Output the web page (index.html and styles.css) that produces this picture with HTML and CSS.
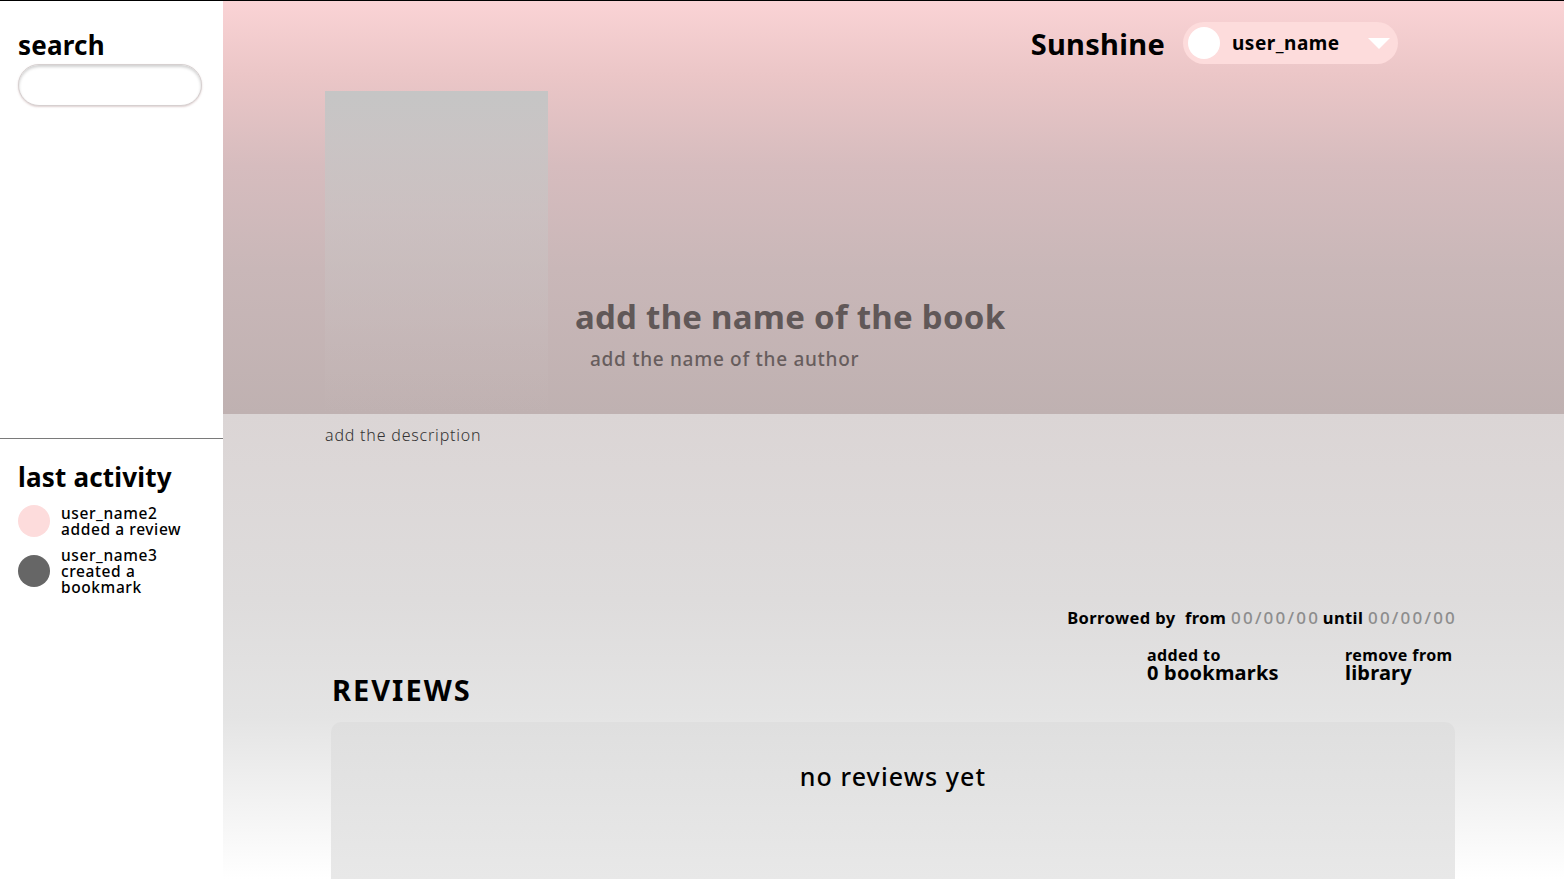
FILE: index.html
```html
<!DOCTYPE html>
<html lang="en">
<head>
<meta charset="utf-8">
<title>Sunshine - book</title>
<link rel="stylesheet" href="styles.css">
</head>
<body>
<aside class="sidebar">
  <div class="search-block">
    <h2 class="side-title">search</h2>
    <input class="search-input" type="text" aria-label="search">
  </div>
  <div class="activity">
    <h2 class="side-title">last activity</h2>
    <ul class="activity-list">
      <li class="activity-item"><span class="dot dot-pink"></span><span class="activity-text">user_name2<br>added a review</span></li>
      <li class="activity-item"><span class="dot dot-grey"></span><span class="activity-text">user_name3<br>created a<br>bookmark</span></li>
    </ul>
  </div>
</aside>
<main class="main">
  <header class="hero">
    <div class="topbar">
      <span class="brand">Sunshine</span>
      <div class="user-pill">
        <span class="user-avatar"></span>
        <span class="user-name">user_name</span>
        <span class="caret"></span>
      </div>
    </div>
    <div class="book-row">
      <div class="cover"></div>
      <div class="book-titles">
        <h1 class="book-title">add the name of the book</h1>
        <p class="book-author">add the name of the author</p>
      </div>
    </div>
  </header>
  <section class="details">
    <p class="description">add the description</p>
    <p class="borrowed"><b>Borrowed by</b>&nbsp; <b>from</b> <span class="date">00/00/00</span> <b>until</b> <span class="date">00/00/00</span></p>
    <div class="reviews-row">
      <h2 class="reviews-title">REVIEWS</h2>
      <div class="actions">
        <div class="action"><span class="action-small">added to</span><span class="action-big">0 bookmarks</span></div>
        <div class="action"><span class="action-small">remove from</span><span class="action-big">library</span></div>
      </div>
    </div>
    <div class="review-box">
      <p class="no-reviews">no reviews yet</p>
    </div>
  </section>
</main>
</body>
</html>
```
FILE: styles.css
```css
* { box-sizing: border-box; }
html, body { height: 100%; }
body {
  margin: 0;
  border-top: 1px solid #000;
  display: flex;
  overflow: hidden;
  font-family: "Noto Sans", "Open Sans", sans-serif;
  color: #000;
  background: #fff;
}
h1, h2, p, ul { margin: 0; padding: 0; }

.sidebar {
  width: 223px;
  flex: none;
  background: #fff;
  display: flex;
  flex-direction: column;
}
.search-block {
  height: 438px;
  padding: 27px 0 0 18px;
  border-bottom: 1px solid #7a7a7a;
}
.side-title {
  font-size: 26px;
  font-weight: 700;
  line-height: 34px;
  letter-spacing: 0.2px;
}
.search-input {
  display: block;
  margin-top: 2px;
  width: 184px;
  height: 42px;
  border-radius: 21px;
  border: 1px solid #d6d0d0;
  background: #fff;
  box-shadow: inset 0 2px 3px rgba(0,0,0,0.18), 0 1px 2px rgba(160,120,120,0.35);
  outline: none;
}
.activity { padding: 21px 0 0 18px; }
.activity-list { list-style: none; margin-top: 11px; display: flex; flex-direction: column; gap: 10px; }
.activity-item { display: flex; align-items: center; gap: 11px; }
.dot { width: 32px; height: 32px; border-radius: 50%; flex: none; }
.dot-pink { background: #fddcdc; }
.dot-grey { background: #666; }
.activity-text { font-size: 15.5px; font-weight: 500; line-height: 16px; letter-spacing: 0.6px; }

.main { flex: 1; display: flex; flex-direction: column; min-width: 0; }
.hero {
  height: 413px;
  flex: none;
  background: linear-gradient(180deg, #fad3d5 0%, #ebc6c7 18%, #d6bcbe 40%, #c9b7b8 65%, #bfb1b1 100%);
  padding: 21px 166px 0 102px;
  display: flex;
  flex-direction: column;
}
.topbar { display: flex; justify-content: flex-end; align-items: center; gap: 18px; height: 42px; }
.brand { font-size: 29px; font-weight: 700; letter-spacing: 0.3px; }
.user-pill {
  width: 215px; height: 42px;
  border-radius: 21px;
  background: #fddcdc;
  display: flex; align-items: center;
  padding: 0 8px 0 5px;
}
.user-avatar { width: 32px; height: 32px; border-radius: 50%; background: #fff; flex: none; }
.user-name { font-size: 19px; font-weight: 700; margin-left: 12px; flex: 1; letter-spacing: 0.5px; }
.caret {
  width: 0; height: 0;
  border-left: 11px solid transparent;
  border-right: 11px solid transparent;
  border-top: 11px solid #fff;
}
.book-row { display: flex; margin-top: 27px; flex: 1; }
.cover {
  width: 223px;
  background: linear-gradient(180deg, rgba(197,197,197,1) 0%, rgba(200,196,196,0.6) 40%, rgba(200,190,190,0.25) 80%, rgba(191,177,177,0) 100%);
}
.book-titles { padding: 206px 0 0 27px; color: #615858; }
.book-title { font-size: 33px; font-weight: 700; line-height: 40px; letter-spacing: 0.25px; }
.book-author { font-size: 19px; font-weight: 500; line-height: 24px; margin: 10px 0 0 15px; color: #675d5d; letter-spacing: 0.7px; }

.details {
  flex: 1;
  background: linear-gradient(180deg, #dbd5d5 0%, #dedcdc 40%, #e4e4e4 65%, #ffffff 100%);
  padding: 10px 109px 0 102px;
  display: flex;
  flex-direction: column;
}
.description { font-size: 16px; font-weight: 300; line-height: 22px; color: #333; letter-spacing: 0.8px; }
.borrowed { margin-top: 162px; text-align: right; font-size: 16.5px; line-height: 20px; letter-spacing: 0.4px; }
.borrowed b { font-weight: 700; }
.date { color: #8d8d8d; font-weight: 500; font-size: 17px; letter-spacing: 2.2px; margin-right: -2px; }
.reviews-row { display: flex; justify-content: space-between; align-items: flex-start; padding-left: 7px; margin-top: 19px; }
.reviews-title { font-size: 29px; font-weight: 700; line-height: 34px; margin-top: 26px; letter-spacing: 2px; }
.actions { display: flex; gap: 68px; }
.action { display: flex; flex-direction: column; width: 130px; white-space: nowrap; }
.action + .action { width: 110px; }
.action-small { font-size: 16px; font-weight: 700; line-height: 16px; letter-spacing: 0.4px; }
.action-big { font-size: 20px; font-weight: 700; line-height: 19px; letter-spacing: 0.2px; }
.review-box {
  margin: 15px 0 0 6px;
  flex: 1;
  border-radius: 10px 10px 0 0;
  background: linear-gradient(180deg, #dfdfdf 0%, #e8e8e8 100%);
  padding-top: 38px;
}
.no-reviews { text-align: center; font-size: 25px; font-weight: 500; line-height: 32px; letter-spacing: 1.1px; }
```
